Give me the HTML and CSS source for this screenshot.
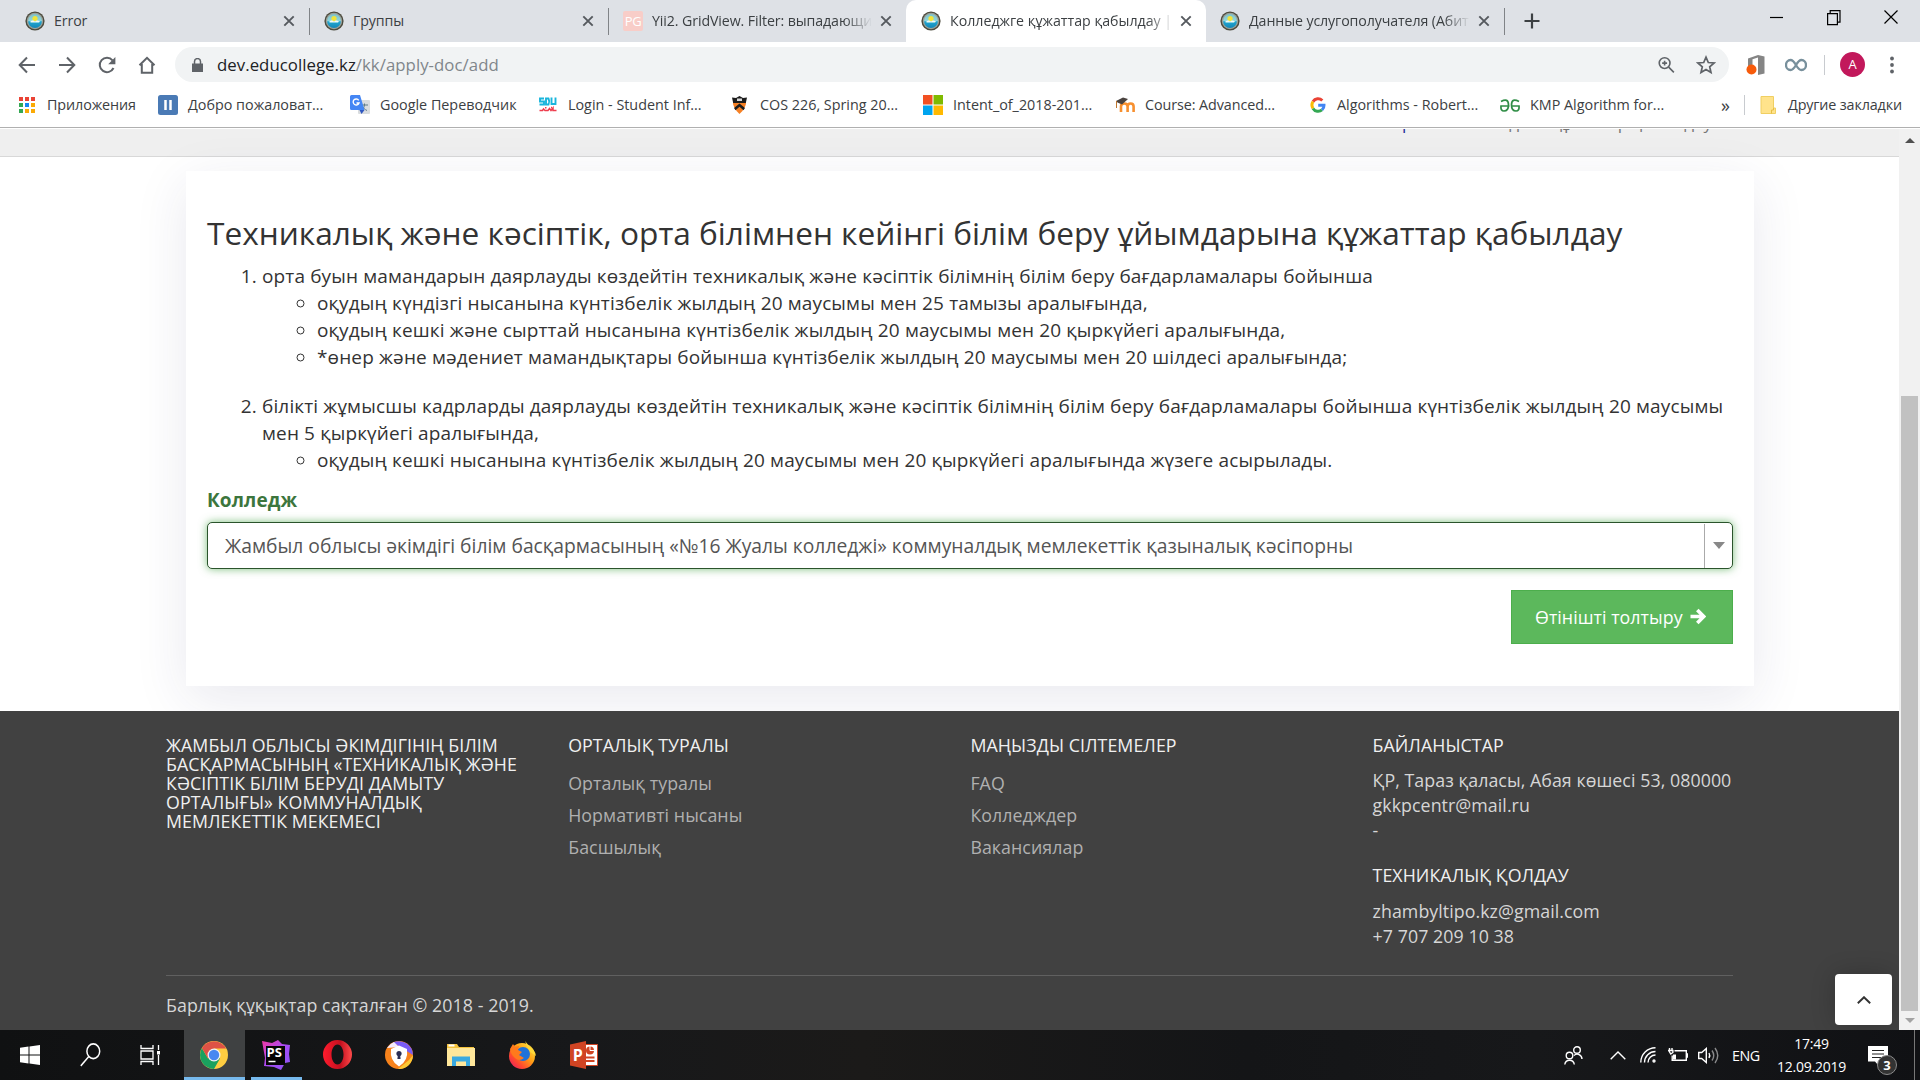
FILE: index.html
```html
<!DOCTYPE html>
<html lang="kk">
<head>
<meta charset="utf-8">
<title>Колледжге құжаттар қабылдау</title>
<link rel="stylesheet" href="styles.css">
</head>
<body>
<svg class="defs" width="0" height="0">
  <defs>
    <linearGradient id="sky" x1="0" y1="0" x2="0" y2="1"><stop offset="0" stop-color="#7fc3c9"/><stop offset=".5" stop-color="#8fd6df"/><stop offset=".55" stop-color="#1fa6d0"/><stop offset="1" stop-color="#1488b8"/></linearGradient>
    <linearGradient id="psg" x1="0" y1="0" x2="1" y2="1"><stop offset="0" stop-color="#f138a0"/><stop offset=".5" stop-color="#a84bf5"/><stop offset="1" stop-color="#8a55f0"/></linearGradient>
    <linearGradient id="opg" x1="0" y1="0" x2="1" y2="0"><stop offset="0" stop-color="#ff1b2d"/><stop offset=".6" stop-color="#c4101f"/><stop offset="1" stop-color="#ff4b4b"/></linearGradient>
    <linearGradient id="ffg" x1="1" y1="0" x2="0" y2="1"><stop offset="0" stop-color="#fff44f"/><stop offset=".4" stop-color="#ffa215"/><stop offset=".7" stop-color="#ff4a2e"/><stop offset="1" stop-color="#e3106f"/></linearGradient>
    <symbol id="fav" viewBox="0 0 20 20"><circle cx="10" cy="10" r="9.6" fill="#4c4a3c"/><circle cx="10" cy="10" r="8.2" fill="#9aa19a"/><circle cx="10" cy="10" r="6.9" fill="url(#sky)"/><circle cx="10" cy="7.6" r="2.6" fill="#f1e43a"/><path d="M5 11c2-1.800 3.500-1.800 5-.6 1.500-1.200 3-1.200 5 .2l-1 1H6z" fill="#f3fbf5"/></symbol>
    <symbol id="x" viewBox="0 0 12 12"><path d="M1.300 1.300l9.400 9.400M10.700 1.300l-9.400 9.400" stroke="#55595e" stroke-width="1.900" fill="none"/></symbol>
  </defs>
</svg>

<header class="browser">
  <div class="tabs">
    <div class="tab tab-first"><svg class="fav"><use href="#fav"/></svg><span class="tab-title">Error</span><svg class="close"><use href="#x"/></svg></div>
    <div class="tab"><svg class="fav"><use href="#fav"/></svg><span class="tab-title">Группы</span><svg class="close"><use href="#x"/></svg></div>
    <div class="tab tab-third"><span class="pg">PG</span><span class="tab-title fade">Yii2. GridView. Filter: выпадающий</span><svg class="close"><use href="#x"/></svg></div>
    <div class="tab tab-active"><svg class="fav"><use href="#fav"/></svg><span class="tab-title fade">Колледжге құжаттар қабылдау |</span><svg class="close"><use href="#x"/></svg></div>
    <div class="tab tab-last"><svg class="fav"><use href="#fav"/></svg><span class="tab-title fade">Данные услугополучателя (Абит</span><svg class="close"><use href="#x"/></svg></div>
    <svg class="plus" viewBox="0 0 16 16"><path d="M8 .5v15M.5 8h15" stroke="#3c4043" stroke-width="2.200"/></svg>
    <div class="window-buttons">
      <svg width="14" height="20"><path d="M0 10.500h13" stroke="#000" stroke-width="1.200"/></svg>
      <svg width="14" height="20"><path d="M.6 6.600h9.800v11H.6zM3.200 6.500V3.600h9.800v11.500h-2.500" fill="none" stroke="#000" stroke-width="1.200"/></svg>
      <svg width="14" height="20"><path d="M.5 3.500l13 13M13.500 3.500l-13 13" stroke="#000" stroke-width="1.200"/></svg>
    </div>
  </div>

  <div class="toolbar">
    <div class="nav">
      <svg viewBox="0 0 18 18"><path d="M17 9H2M9 1.500L1.700 9 9 16.500" /></svg>
      <svg viewBox="0 0 18 18"><path d="M1 9h15M9 1.500L16.300 9 9 16.500" /></svg>
      <svg viewBox="0 0 18 18"><path d="M15.500 12A7.200 7.200 0 1 1 14.500 4.300" /><path d="M17.400 1v7.200h-7.200z" class="solid"/></svg>
      <svg viewBox="0 0 18 18"><path d="M1.500 9.300L9 1.800l7.500 7.500M3.800 8v8.700h10.400V8" /></svg>
    </div>
    <div class="address">
      <svg class="lock" viewBox="0 0 11 14"><path d="M0 5.500h11V14H0z" fill="#5f6368"/><path d="M2.500 6V3.600a3 3 0 0 1 6 0V6" fill="none" stroke="#5f6368" stroke-width="1.500"/></svg>
      <span class="url">dev.educollege.kz<span class="path">/kk/apply-doc/add</span></span>
      <svg class="zoom-icon" viewBox="0 0 18 18"><circle cx="7" cy="7" r="5.700"/><path d="M11.300 11.300l5.500 5.500M7 4.400v5.200M4.400 7h5.200"/></svg>
      <svg class="star" viewBox="0 0 20 20"><path d="M10 2.200l2.300 5.300 5.800.5-4.400 3.800 1.300 5.700-5-3-5 3 1.300-5.700L1.900 8l5.800-.5z"/></svg>
    </div>
    <div class="extensions">
      <svg class="office" viewBox="0 0 20 20"><path d="M12 0l6.500 1.500v17L12 20V2.600L6.500 4.200v9L2 15V3.500z" fill="#858585"/><circle cx="5.500" cy="14.500" r="5" fill="#f75b0b"/></svg>
      <svg class="infinity" viewBox="0 0 22 14"><path d="M11 7C9 3.500 7.500 2 5.500 2a4.500 5 0 0 0 0 10C7.500 12 9 10.500 11 7s3.500-5 5.500-5a4.500 5 0 0 1 0 10C14.500 12 13 10.500 11 7z" fill="none" stroke="#78909c" stroke-width="2.300"/></svg>
      <i class="divider"></i>
      <span class="avatar">A</span>
      <svg class="menu" viewBox="0 0 4 18"><circle cx="2" cy="2.500" r="1.900"/><circle cx="2" cy="9" r="1.900"/><circle cx="2" cy="15.500" r="1.900"/></svg>
    </div>
  </div>

  <nav class="bookmarks">
    <a class="bm bm-apps"><svg viewBox="0 0 16 16"><path d="M0 0h4v4H0zM6 0h4v4H6zM12 0h4v4h-4z" fill="#ea4335"/><path d="M0 6h4v4H0zM0 12h4v4H0z" fill="#34a853"/><path d="M6 6h4v4H6z" fill="#1a86f0"/><path d="M6 12h4v4H6zM12 6h4v4h-4zM12 12h4v4h-4z" fill="#fbaa05"/></svg>Приложения</a>
    <a class="bm bm-dobro"><svg viewBox="0 0 20 20"><rect width="20" height="20" rx="2.500" fill="#4a7ab5"/><path d="M7.500 5v10M12.500 5v10" stroke="#fff" stroke-width="2.500"/></svg>Добро пожаловат...</a>
    <a class="bm bm-translate"><svg viewBox="0 0 20 20"><rect x="8" y="5" width="12" height="14" rx="1" fill="#d9dcdf"/><path d="M11 10h7M14.500 8.500V10c0 2-1.500 4-3 5M12.500 11.500c1 2 2.500 3 4.500 4" stroke="#5f7b86" fill="none"/><path d="M1.500 0H10l4.500 15H1.500A1.500 1.500 0 0 1 0 13.500v-12A1.500 1.500 0 0 1 1.500 0z" fill="#4486f4"/><path d="M9.500 15h5L11.500 19z" fill="#3058c0"/><path d="M8.700 5.300A3 3 0 1 0 9 8H6.500" fill="none" stroke="#fff" stroke-width="1.400"/></svg>Google Переводчик</a>
    <a class="bm bm-sdu"><svg viewBox="0 0 18 16"><path d="M5 1.500H1v3h4v3H.5M7 7.500v-6h2.500Q11 4.500 9.500 7.500zM12.500.5v6.500h4V.5" fill="none" stroke="#19b5dc" stroke-width="1.900"/><path d="M.5 13.500h3l1-1.500 1.500 1.500h3l1.500-2 1.500 2 2-2.500v2.500h3.500M6 10.800h1.500M12 10.500h1" fill="none" stroke="#ee3d4e" stroke-width="1.500"/></svg>Login - Student Inf...</a>
    <a class="bm bm-cos"><svg viewBox="0 0 15 18"><path d="M1 4Q0 11 7.500 18 15 11 14 4z" fill="#f58025"/><path d="M0 1.500l4 .5L7.500 0 11 2l4-.5L13.800 7H1.200z" fill="#1c1c1c"/><path d="M5 2.500h5V5H5z" fill="#d8d8d8"/><path d="M2 12L7.500 7.500 13 12l-1.500 2.300-4-3.500-4 3.500z" fill="#1c1c1c"/></svg>COS 226, Spring 20...</a>
    <a class="bm bm-ms"><svg viewBox="0 0 20 20"><path d="M0 0h9.500v9.500H0z" fill="#f25022"/><path d="M10.500 0H20v9.500h-9.500z" fill="#7fba00"/><path d="M0 10.500h9.500V20H0z" fill="#00a4ef"/><path d="M10.500 10.500H20V20h-9.500z" fill="#ffb900"/></svg>Intent_of_2018-201...</a>
    <a class="bm bm-moodle"><svg viewBox="0 0 20 16"><path d="M6 15V9.500q0-3 3.300-3t3.300 3V15M12.600 9.500q0-3 3-3t3 3V15" fill="none" stroke="#f7902f" stroke-width="2.600"/><path d="M1 4L8 .5 13 2 7 7.500 2.500 5.500z" fill="#4a4340"/><path d="M1.500 4v7" stroke="#c0762d"/></svg>Course: Advanced...</a>
    <a class="bm bm-google"><svg viewBox="0 0 16 16"><path d="M3 4.600A6 6 0 0 1 12.300 3.500" stroke="#ea4335"/><path d="M3 11.400a6.300 6.300 0 0 1 0-6.800" stroke="#fbbc05"/><path d="M3 11.400a6 6 0 0 0 9 1.500" stroke="#34a853"/><path d="M12 12.900A6 6 0 0 0 14 8.200H8.200" stroke="#4285f4"/></svg>Algorithms - Robert...</a>
    <a class="bm bm-geeks"><svg viewBox="0 0 20 14"><path d="M1 3.500Q8.500-.5 8.500 7q0 6-4.500 6-3.500 0-3-5h8.500M19 3.500Q11.500-.5 11.500 7q0 6 4.500 6 3.500 0 3-5h-7.500" fill="none" stroke="#2f8d46" stroke-width="1.700"/></svg>KMP Algorithm for...</a>
    <span class="more">»</span>
    <i class="divider"></i>
    <a class="bm bm-other"><svg viewBox="0 0 16 18"><path d="M1 .5h12.500V12H15.500v5.500H1z" fill="#ffe38b" stroke="#f0cf62"/><path d="M11.500 17.500V14h2v-2" fill="none" stroke="#e6be46"/></svg>Другие закладки</a>
  </nav>
</header>

<div class="viewport">
  <main class="page">
    <div class="breadcrumb"><div class="crumbs"><span class="crumb-link">Портал</span><span>Колледжге құжаттар қабылдау</span></div></div>

    <section class="content">
      <div class="card">
        <h1>Техникалық және кәсіптік, орта білімнен кейінгі білім беру ұйымдарына құжаттар қабылдау</h1>
        <ol class="terms">
          <li>орта буын мамандарын даярлауды көздейтін техникалық және кәсіптік білімнің білім беру бағдарламалары бойынша
            <ul>
              <li>оқудың күндізгі нысанына күнтізбелік жылдың 20 маусымы мен 25 тамызы аралығында,</li>
              <li>оқудың кешкі және сырттай нысанына күнтізбелік жылдың 20 маусымы мен 20 қыркүйегі аралығында,</li>
              <li>*өнер және мәдениет мамандықтары бойынша күнтізбелік жылдың 20 маусымы мен 20 шілдесі аралығында;</li>
            </ul>
          </li>
          <li>білікті жұмысшы кадрларды даярлауды көздейтін техникалық және кәсіптік білімнің білім беру бағдарламалары бойынша күнтізбелік жылдың 20 маусымы<br>мен 5 қыркүйегі аралығында,
            <ul>
              <li>оқудың кешкі нысанына күнтізбелік жылдың 20 маусымы мен 20 қыркүйегі аралығында жүзеге асырылады.</li>
            </ul>
          </li>
        </ol>
        <div class="label">Колледж</div>
        <div class="select"><span class="select-value">Жамбыл облысы әкімдігі білім басқармасының «№16 Жуалы колледжі» коммуналдық мемлекеттік қазыналық кәсіпорны</span><span class="select-arrow"></span></div>
        <div class="actions"><a class="submit">Өтінішті толтыру<svg viewBox="0 0 16 16"><path d="M.5 8h12M7.300 1.500L13.800 8l-6.500 6.500" fill="none" stroke="#fff" stroke-width="3.600"/></svg></a></div>
      </div>
    </section>

    <footer class="footer">
      <div class="columns">
        <div class="column"><h4>ЖАМБЫЛ ОБЛЫСЫ ӘКІМДІГІНІҢ БІЛІМ<br>БАСҚАРМАСЫНЫҢ «ТЕХНИКАЛЫҚ ЖӘНЕ<br>КӘСІПТІК БІЛІМ БЕРУДІ ДАМЫТУ<br>ОРТАЛЫҒЫ» КОММУНАЛДЫҚ<br>МЕМЛЕКЕТТІК МЕКЕМЕСІ</h4></div>
        <div class="column"><h4>ОРТАЛЫҚ ТУРАЛЫ</h4>
          <ul class="links"><li>Орталық туралы</li><li>Нормативті нысаны</li><li>Басшылық</li></ul></div>
        <div class="column"><h4>МАҢЫЗДЫ СІЛТЕМЕЛЕР</h4>
          <ul class="links"><li>FAQ</li><li>Колледждер</li><li>Вакансиялар</li></ul></div>
        <div class="column contacts"><h4>БАЙЛАНЫСТАР</h4>
          <p>ҚР, Тараз қаласы, Абая көшесі 53, 080000<br>gkkpcentr@mail.ru<br>-</p>
          <h4>ТЕХНИКАЛЫҚ ҚОЛДАУ</h4>
          <p>zhambyltipo.kz@gmail.com<br>+7 707 209 10 38</p></div>
      </div>
      <div class="copyright">Барлық құқықтар сақталған © 2018 - 2019.</div>
    </footer>
    <a class="to-top"><svg viewBox="0 0 14 8"><path d="M.8 7.300L7 1.200l6.200 6.100" fill="none" stroke="#333" stroke-width="1.900"/></svg></a>
  </main>
  <div class="scrollbar">
    <i class="arrow-up"></i><i class="thumb"></i><i class="arrow-down"></i>
  </div>
</div>

<div class="taskbar">
  <div class="apps">
    <span class="app"><svg width="20" height="20" viewBox="0 0 20 20"><path d="M0 2.800l8.500-1.200v7.900H0zM9.500 1.500L20 0v9.500H9.500zM0 10.500h8.500v7.900L0 17.200zM9.500 10.500H20V20L9.500 18.500z" fill="#fff"/></svg></span>
    <span class="app"><svg width="21" height="24" viewBox="0 0 21 21" preserveAspectRatio="none"><circle cx="13.300" cy="7.200" r="6.400" fill="none" stroke="#fff" stroke-width="1.500"/><path d="M8.800 11.800L.8 20" stroke="#fff" stroke-width="1.500"/></svg></span>
    <span class="app"><svg width="21" height="20" viewBox="0 0 21 20"><path d="M1 0v3.500h12V0M1 20v-3.500h12V20M1 6h12v8H1zM18.500 0v5M18.500 10v10" fill="none" stroke="#fff" stroke-width="1.300"/><path d="M17 6h3v3.500h-3z" fill="#fff"/></svg></span>
    <span class="app app-current"><svg width="28" height="28" viewBox="0 0 28 28"><circle cx="14" cy="14" r="14" fill="#ffcd41"/><path d="M14 14L20 17.500 14 28A14 14 0 0 1 1.900 7L8 17.500z" fill="#1aa15f"/><path d="M1.900 7A14 14 0 0 1 26.100 7.500H14L8 17.500z" fill="#de5246"/><circle cx="14" cy="14" r="6.500" fill="#f1f1f1"/><circle cx="14" cy="14" r="5.200" fill="#4688f1"/></svg></span>
    <span class="app app-open"><span class="phpstorm"><svg width="30" height="30" viewBox="0 0 30 30"><path d="M1 1l10 2 6-3 4 4 8 1-1 9 1 8-5 1-4 7-7-3-10-1 1-8z" fill="url(#psg)"/><path d="M5 6h19v19H5z" fill="#050505"/><path d="M7.500 21.500h7" stroke="#fff" stroke-width="1.500"/></svg><b>PS</b></span></span>
    <span class="app"><svg width="29" height="29" viewBox="0 0 29 29"><path fill-rule="evenodd" d="M14.500 0a14.500 14.500 0 1 0 0 29 14.500 14.500 0 1 0 0-29zM14.500 4.500c3.500 0 6 4.500 6 10s-2.500 10-6 10-6-4.500-6-10 2.500-10 6-10z" fill="url(#opg)"/></svg></span>
    <span class="app"><svg width="28" height="28" viewBox="0 0 28 28"><circle cx="14" cy="14" r="14" fill="#f7821b"/><path d="M8 1.500A14 14 0 0 1 28 14L20 9z" fill="#7b5cf5"/><path d="M28 14A14 14 0 0 1 13 28l11-9z" fill="#fcc935"/><path d="M2 7A14 14 0 0 1 9 1l5 5z" fill="#f3eaff"/><path d="M14 4.500l8 3.500q1.500 12-8 17.500Q4.500 20 6 8z" fill="#fff"/><circle cx="14" cy="12.500" r="2.600" fill="#2b2f55"/><path d="M13 13h2l.6 5h-3.200z" fill="#2b2f55"/></svg></span>
    <span class="app"><svg width="28" height="24" viewBox="0 0 28 24"><path d="M0 1h10l2 3h15v18H0z" fill="#f5c33c"/><path d="M1.500 1.500h6v2h-6z" fill="#fff"/><path d="M0 5h28v18H0z" fill="#ffe79b"/><path d="M5 23V13.500h18V23h-4v-4.500h-10V23z" fill="#3aa9e0"/></svg></span>
    <span class="app"><svg width="28" height="28" viewBox="0 0 28 28"><circle cx="14" cy="15" r="13" fill="url(#ffg)"/><path d="M17 0q3 3 3 5 7 3 8 10l-7-5z" fill="#ffd93a"/><circle cx="15" cy="13" r="7" fill="#1e72d8"/><path d="M2 8l3-5 2 3 4-1-1 4 4 2-3 3 5 3q-5 4-9 0Q3 14 2 8z" fill="#ff7a1c"/></svg></span>
    <span class="app"><span class="powerpoint"><svg width="28" height="28" viewBox="0 0 28 28"><path d="M14 3.500h13.500v21H14z" fill="#fff" stroke="#d04423"/><circle cx="20" cy="9.500" r="4" fill="#d04423"/><path d="M20 5v4.500h5" stroke="#fff" fill="none"/><path d="M15 16.500h9.500M15 20h9.500" stroke="#d04423" stroke-width="1.800"/><path d="M0 3.500L16 0v28L0 24.500z" fill="#d04423"/></svg><b>P</b></span></span>
  </div>
  <div class="tray">
    <svg class="people" viewBox="0 0 19 19"><circle cx="13" cy="4" r="3.300"/><circle cx="5.500" cy="9.500" r="3.300"/><path d="M.8 18.500a4.800 5 0 0 1 9.500 0M10 9.500a4.800 5 0 0 1 8 3.500"/></svg>
    <svg class="chevron" viewBox="0 0 16 9"><path d="M.7 8.300L8 1l7.300 7.300"/></svg>
    <svg class="wifi" viewBox="0 0 16 16"><path d="M.8 15.500A14.700 14.700 0 0 1 15.500.8M4.500 15.500a11 11 0 0 1 11-11M8 15.500a7.500 7.500 0 0 1 7.500-7.500"/><circle cx="14" cy="14" r="1"/></svg>
    <svg class="battery" viewBox="0 0 20 14"><path d="M6.500 2.800h11.800v9.400H4.200V7.500M18.500 6h1v3h-1M1.500 0v2.500M4 0v2.500M.7 2.500h4.200v2L2.800 6z"/><path d="M5 6.500h3v5H5z" class="charge"/></svg>
    <svg class="volume" viewBox="0 0 21 17"><path d="M.7 5.500h3L8.300 1.500v14L3.700 11.500h-3z"/><path d="M11 6q1.500 2.500 0 5"/><path d="M14 3.500q3.500 5 0 10M17 1q5.500 7.500 0 15" opacity=".5"/></svg>
    <span class="lang">ENG</span>
    <div class="clock"><span>17:49</span><span>12.09.2019</span></div>
    <div class="notify"><svg viewBox="0 0 20 19"><path d="M0 0h20v15h-6l-4 4-3-3.500H0z" fill="#fff"/><path d="M4 4.500h12M4 8h12M4 11.500h12" stroke="#222" stroke-width="1.100"/></svg><b>3</b></div>
    <i class="peek"></i>
  </div>
</div>
</body>
</html>
```
FILE: styles.css
```css
* { box-sizing: border-box; }
body {
  margin: 0;
  width: 1920px;
  height: 1080px;
  overflow: hidden;
  display: flex;
  flex-direction: column;
  font-family: "Open Sans", "Noto Sans", sans-serif;
  background: #fff;
}
svg { display: block; flex: none; }
.defs { position: absolute; }
h1, h4, p, ol, ul { margin: 0; padding: 0; font-weight: 400; }

/* Browser window */
.browser { flex: none; height: 129px; }
.tabs { height: 42px; display: flex; align-items: stretch; background: #dee1e6; }
.tab {
  width: 299px;
  display: flex;
  align-items: center;
  padding: 0 14px 1px;
  border-right: 1px solid #8b8e92;
  border-image: linear-gradient(#dee1e6 9px, #808387 9px, #808387 34px, #dee1e6 34px) 1;
  font-size: 14.200px;
  color: #3c4043;
}
.tab-first { width: 310px; padding-left: 25px; }
.tab-third { width: 297px; padding-left: 14px; border: 0; }
.tab-active { width: 300px; padding-left: 15px; background: #fff; border: 0; border-radius: 10px 10px 0 0; }
.tab-last { width: 299px; padding-left: 14px; }
.fav { width: 20px; height: 20px; }
.tab-title { flex: 1; min-width: 0; margin-left: 9px; margin-right: 8px; white-space: nowrap; overflow: hidden; letter-spacing: -.1px; }
.tab-active .tab-title { letter-spacing: 0; margin-right: 6px; }
.fade { -webkit-mask-image: linear-gradient(90deg, #000 88%, transparent); mask-image: linear-gradient(90deg, #000 88%, transparent); }
.close { width: 12px; height: 12px; }
.pg { width: 20px; height: 20px; border-radius: 2px; background: #f8cdc8; color: #fff; font-size: 13px; line-height: 20px; text-align: center; letter-spacing: -.5px; }
.plus { width: 16px; height: 16px; margin: 13px 0 0 19px; }
.window-buttons { margin: 7px 22px 0 auto; display: flex; gap: 43px; }

.toolbar { height: 44px; display: flex; align-items: center; padding-top: 1px; }
.nav { width: 175px; display: flex; gap: 22px; padding-left: 18px; }
.nav svg { width: 18px; height: 18px; fill: none; stroke: #5f6368; stroke-width: 2; }
.nav .solid { fill: #5f6368; stroke: none; }
.address { width: 1554px; height: 35px; border-radius: 18px; background: #f1f3f4; display: flex; align-items: center; padding: 0 13px 0 17px; }
.lock { width: 11px; height: 14px; }
.url { margin-left: 14px; flex: 1; font-size: 16.800px; letter-spacing: .04px; color: #202124; }
.path { color: #80868b; }
.zoom-icon { width: 17px; height: 18px; margin-right: 21px; fill: none; stroke: #5f6368; stroke-width: 1.700; }
.star { width: 20px; height: 20px; fill: none; stroke: #5f6368; stroke-width: 1.700; }
.extensions { display: flex; align-items: center; padding-left: 17px; }
.office { width: 20px; height: 20px; }
.infinity { width: 22px; height: 14px; margin-left: 19px; }
.divider { width: 1px; height: 20px; background: #c8cbcf; }
.toolbar .divider { margin-left: 17px; }
.avatar { width: 25px; height: 25px; border-radius: 50%; margin-left: 15px; background: #c2185b; color: #fff; font-size: 13px; line-height: 25px; text-align: center; }
.menu { width: 4px; height: 18px; margin-left: 25px; fill: #5f6368; }

.bookmarks { height: 42px; display: flex; align-items: center; position: relative; padding-bottom: 4px; border-bottom: 1px solid #b0b0b0; font-size: 14.350px; color: #3c4043; }
.bm { display: flex; align-items: center; white-space: nowrap; gap: 10px; }
.bm-apps { width: 138px; padding-left: 19px; gap: 12px; margin-right: 20px; letter-spacing: -.1px; }
.bm-apps svg { width: 16px; height: 16px; }
.bm-dobro { width: 192px; }
.bm-dobro svg, .bm-translate svg, .bm-ms svg { width: 20px; height: 20px; }
.bm-translate { width: 189px; }
.bm-sdu { width: 193px; gap: 11px; }
.bm-sdu svg { width: 18px; height: 16px; }
.bm-cos { width: 191px; gap: 13px; }
.bm-cos svg { width: 15px; height: 18px; }
.bm-ms { width: 192px; }
.bm-moodle { width: 195px; letter-spacing: -.08px; }
.bm-moodle svg { width: 20px; height: 16px; }
.bm-google { width: 190px; gap: 11px; }
.bm-google svg { width: 16px; height: 16px; fill: none; stroke-width: 3; }
.bm-geeks { width: 221px; }
.bm-geeks svg { width: 20px; height: 14px; }
.more { width: 23px; font-size: 18px; line-height: 18px; }
.bm-other { margin-left: 15px; gap: 12px; letter-spacing: -.15px; }
.bm-other svg { width: 16px; height: 18px; }

/* Page viewport */
.viewport { height: 901px; flex: none; display: flex; }
.page { width: 1899px; position: relative; display: flex; flex-direction: column; overflow: hidden; }
.breadcrumb { height: 28px; flex: none; background: #efefef; border-bottom: 1px solid #d8d8d8; overflow: hidden; }
.crumbs { width: 1546px; display: flex; justify-content: flex-end; gap: 20px; margin-top: -19px; font-size: 17px; line-height: 25px; color: #777; margin-left: 166px; }
.crumb-link { color: #23309a; }
.content { flex: none; height: 554px; padding: 14px 145px 0 186px; }
.card {
  height: 515px;
  padding: 44px 21px 0;
  background: #fff;
  box-shadow: 0 13px 50px rgba(43, 43, 94, .1);
  color: #333;
}
h1 { font-size: 31.630px; line-height: 35px; white-space: nowrap; }
.terms { margin-top: 12.500px; padding-left: 55px; font-size: 19px; line-height: 27px; letter-spacing: .138px; }
.terms > li + li { margin-top: 22px; }
.terms > li { white-space: nowrap; }
.terms ul { padding-left: 55px; list-style: circle; }
.label { margin-top: 13px; font-size: 19px; line-height: 27px; font-weight: 700; letter-spacing: .1px; color: #3c763d; }
.select { margin-top: 8.500px; height: 47px; display: flex; align-items: center; border: 1px solid #2b542c; border-radius: 5px; box-shadow: 0 0 9px rgba(80, 170, 80, .75); background: #fff; }
.select-value { flex: 1; padding-left: 17px; font-size: 19.270px; color: #555; white-space: nowrap; }
.select-arrow { width: 28px; height: 44px; border-left: 1px solid #aaa; display: flex; align-items: center; justify-content: center; }
.select-arrow::before { content: ""; border: 6px solid transparent; border-top: 7px solid #888; border-bottom: 0; }
.actions { display: flex; justify-content: flex-end; margin-top: 21px; }
.submit { width: 222px; height: 54px; display: flex; align-items: center; padding-left: 23px; padding-bottom: 1px; gap: 7px; background: #5cb85c; border: 1px solid #4cae4c; color: #fff; font-size: 17.800px; letter-spacing: .05px; white-space: nowrap; }
.submit svg { width: 16px; height: 17px; }

.footer { flex: 1; background: #414141; padding: 24.500px 166px 0; font-size: 17.800px; letter-spacing: .06px; color: #d6d6d6; position: relative; }
.columns { height: 239px; display: grid; grid-template-columns: repeat(4, 402.200px); }
.footer h4 { font-size: 17.800px; line-height: 19.100px; color: #f0f0f0; margin-bottom: 12.500px; white-space: nowrap; }
.links { list-style: none; line-height: 32px; color: #b0b0b0; }
.footer p { line-height: 25px; margin-bottom: 23.500px; white-space: nowrap; }
.contacts h4 { margin-bottom: 13.300px; }
.copyright { width: 1567px; border-top: 1px solid #606060; padding-top: 16px; line-height: 26px; }
.to-top { position: absolute; right: 7px; bottom: 5px; width: 57px; height: 51px; border-radius: 4px; background: #fff; box-shadow: 0 0 25px rgba(0, 0, 0, .2); display: flex; align-items: center; justify-content: center; }
.to-top svg { width: 14px; height: 8px; }

.scrollbar { width: 21px; background: #f1f1f1; display: flex; flex-direction: column; align-items: center; }
.arrow-up { margin-top: 9px; border: 5px solid transparent; border-bottom: 5px solid #505050; border-top: 0; }
.thumb { margin-top: 253px; width: 17px; height: 615px; background: #c1c1c1; }
.arrow-down { margin-top: 7px; border: 5px solid transparent; border-top: 5px solid #a3a3a3; border-bottom: 0; }

/* Taskbar */
.taskbar { height: 50px; flex: none; background: linear-gradient(90deg, #101112, #17181a 30%, #1b1a19 45%, #141517 65%, #17181a 80%, #101114); display: flex; justify-content: space-between; color: #fff; }
.apps { display: flex; }
.app { width: 61.500px; display: flex; align-items: center; justify-content: center; padding-bottom: 1px; }
.app:nth-child(1) { width: 60px; }
.app:nth-child(3) { width: 62px; padding-right: 4px; }
.app-current { background: #3f4142; border-bottom: 3px solid #76b9ed; border-top: 3px solid #3f4142; }
.app-open { border-bottom: 3px solid #76b9ed; border-top: 3px solid transparent; width: 51px; margin: 0 5px 0 6px; padding-right: 2px; }
.phpstorm, .powerpoint { display: grid; }
.phpstorm > *, .powerpoint > * { grid-area: 1 / 1; }
.phpstorm b { font-size: 13px; line-height: 13px; padding: 6px 0 0 6px; }
.powerpoint b { font-size: 16px; line-height: 28px; padding-left: 3px; }

.tray { display: flex; align-items: center; }
.tray svg { fill: none; stroke: #fff; stroke-width: 1.400; }
.people { width: 19px; height: 19px; }
.tray .chevron { width: 16px; height: 9px; margin-left: 27px; }
.wifi { width: 16px; height: 16px; margin-left: 14px; }
.battery { width: 20px; height: 14px; margin-left: 12px; }
.charge { fill: #fff; stroke: none; }
.volume { width: 21px; height: 17px; margin-left: 10px; }
.lang { margin-left: 13px; width: 44px; font-size: 14.300px; letter-spacing: -.5px; }
.clock { width: 71px; display: flex; flex-direction: column; align-items: center; font-size: 14px; line-height: 23px; letter-spacing: -.25px; }
.notify { position: relative; width: 20px; height: 19px; margin-left: 21px; }
.tray .notify svg { width: 20px; height: 19px; stroke: none; }
.notify b { position: absolute; left: 9px; top: 9px; width: 20px; height: 20px; border: 1px solid #8b8b8b; border-radius: 50%; background: #333; font-size: 13px; line-height: 18px; text-align: center; }
.peek { width: 1px; height: 50px; background: #777; margin: 0 5px 0 26px; }
```
